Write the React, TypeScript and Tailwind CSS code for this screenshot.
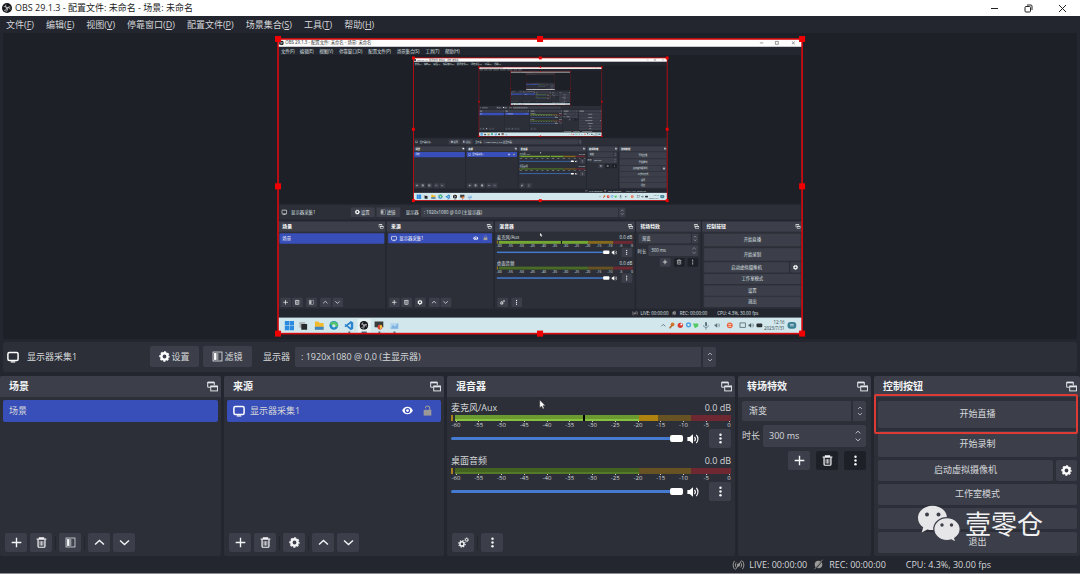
import { createContext, useContext, useState, type ReactNode, type SVGProps } from "react";

type IconProps = SVGProps<SVGSVGElement>;

const MENUS = [
  { label: "文件", key: "F", x: 6 },
  { label: "编辑", key: "E", x: 45 },
  { label: "视图", key: "V", x: 85 },
  { label: "停靠窗口", key: "D", x: 126 },
  { label: "配置文件", key: "P", x: 186 },
  { label: "场景集合", key: "S", x: 245 },
  { label: "工具", key: "T", x: 304 },
  { label: "帮助", key: "H", x: 344 },
];

const SCALE = ["-60", "-55", "-50", "-45", "-40", "-35", "-30", "-25", "-20", "-15", "-10", "-5", "0"];

const TITLE = "OBS 29.1.3 - 配置文件: 未命名 - 场景: 未命名";

/* ---------- icons ---------- */

function Icon({ children, ...props }: IconProps) {
  return (
    <svg
      viewBox="0 0 16 16"
      width={11}
      height={11}
      fill="none"
      stroke="currentColor"
      strokeWidth={2}
      aria-hidden="true"
      {...props}
    >
      {children}
    </svg>
  );
}

const PlusIcon = (p: IconProps) => (
  <Icon {...p}>
    <path d="M8 1v14M1 8h14" />
  </Icon>
);

const TrashIcon = (p: IconProps) => (
  <Icon {...p}>
    <path d="M1 3.2h14M5 2.4V1.2h6v1.2" strokeWidth={1.8} />
    <path d="M3 4v9.5c0 .8.6 1.4 1.4 1.4h7.2c.8 0 1.4-.6 1.4-1.4V4" strokeWidth={1.8} />
    <path d="M6 6v6.5M8 6v6.5M10 6v6.5" strokeWidth={1.1} />
  </Icon>
);

const FilterIcon = (p: IconProps) => (
  <Icon {...p}>
    <rect x="1.5" y="1.5" width="13" height="13" strokeWidth={1.3} opacity=".8" />
    <rect x="3" y="3" width="3" height="10" fill="currentColor" stroke="none" />
    <rect x="6" y="3" width="2.5" height="10" fill="currentColor" stroke="none" opacity=".55" />
    <rect x="8.5" y="3" width="2" height="10" fill="currentColor" stroke="none" opacity=".2" />
  </Icon>
);

const GearIcon = (p: IconProps) => (
  <Icon {...p}>
    <circle cx="8" cy="8" r="4.6" strokeWidth={3.6} />
    <circle cx="8" cy="8" r="6.6" strokeWidth={2} strokeDasharray="3 2.184" strokeDashoffset="1.5" />
  </Icon>
);

const GearsIcon = (p: IconProps) => (
  <Icon {...p}>
    <circle cx="5.8" cy="10" r="3" strokeWidth={2.2} />
    <circle cx="5.8" cy="10" r="4.7" strokeWidth={1.6} strokeDasharray="1.9 1.791" />
    <circle cx="12.6" cy="4" r="1.8" strokeWidth={1.4} />
    <circle cx="12.6" cy="4" r="2.9" strokeWidth={1} strokeDasharray="1.2 1.077" />
  </Icon>
);

const UpIcon = (p: IconProps) => (
  <Icon {...p}>
    <path d="M1.5 11L8 5l6.5 6" />
  </Icon>
);

const DownIcon = (p: IconProps) => (
  <Icon {...p}>
    <path d="M1.5 5L8 11l6.5-6" />
  </Icon>
);

const DotsIcon = (p: IconProps) => (
  <Icon {...p} stroke="none" fill="currentColor">
    <circle cx="8" cy="2.4" r="1.8" />
    <circle cx="8" cy="8" r="1.8" />
    <circle cx="8" cy="13.6" r="1.8" />
  </Icon>
);

const MonitorIcon = (p: IconProps) => (
  <Icon width={12} height={12} {...p}>
    <rect x="1.2" y="2" width="13.6" height="10.6" rx="2" />
    <path d="M5 14.6h6" strokeWidth={1.6} />
  </Icon>
);

const PopoutIcon = (p: IconProps) => (
  <Icon {...p} strokeWidth={1.4}>
    <path d="M5 9H1V1.6h9.6V6" />
    <path d="M1 2.4h9.6" strokeWidth={2} />
    <rect x="5.4" y="7.2" width="9.8" height="7.2" />
    <path d="M5.4 8.2h9.8" strokeWidth={2} />
  </Icon>
);

const EyeIcon = (p: IconProps) => (
  <Icon {...p} stroke="none" fill="currentColor">
    <path
      fillRule="evenodd"
      d="M8 2.6C4.4 2.6 1.5 4.8.2 8c1.3 3.2 4.2 5.4 7.8 5.4s6.5-2.2 7.8-5.4C14.5 4.8 11.6 2.6 8 2.6zM8 11.8a3.8 3.8 0 110-7.6 3.8 3.8 0 010 7.6z"
    />
    <circle cx="8" cy="8" r="2" />
  </Icon>
);

const LockIcon = (p: IconProps) => (
  <Icon {...p}>
    <rect x="2.4" y="7" width="11.2" height="8.4" fill="currentColor" stroke="none" />
    <path d="M5 4.6C5 2.6 6.2 1.4 8 1.4s3.2 1.2 3.2 3.2V8" strokeWidth={1.6} />
  </Icon>
);

const SpeakerIcon = (p: IconProps) => (
  <Icon width={12} height={12} {...p}>
    <path d="M.5 5.4h3L8 1.6v12.8L3.5 10.6h-3z" fill="currentColor" stroke="none" />
    <path d="M10 5.2c1.3 1.5 1.3 4.1 0 5.6M12.4 2.6c2.9 2.9 2.9 7.9 0 10.8" strokeWidth={1.5} />
  </Icon>
);

const LiveIcon = (p: IconProps) => (
  <Icon width={13} height={12} {...p} strokeWidth={1.3}>
    <path d="M2.8 2.5c-2.6 3-2.6 8 0 11M13.2 2.5c2.6 3 2.6 8 0 11M5 4.8c-1.4 1.8-1.4 4.6 0 6.4M11 4.8c1.4 1.8 1.4 4.6 0 6.4M12 2L4 14" />
    <circle cx="8" cy="8" r="1.5" fill="currentColor" />
  </Icon>
);

const RecIcon = (p: IconProps) => (
  <Icon {...p}>
    <circle cx="8" cy="8" r="5.5" fill="currentColor" stroke="none" />
    <path d="M14.5 1L3 15" stroke="#22252d" strokeWidth={2} />
    <path d="M14 1L2 15" strokeWidth={1.2} />
  </Icon>
);

const ObsLogo = (p: IconProps) => (
  <Icon {...p} stroke="none">
    <circle cx="8" cy="8" r="8" fill="#16181b" />
    <g fill="none" stroke="#e8e8e8" strokeWidth="1.3">
      <path d="M6.2 2.6c-1.3 2.6.1 4.7 2.6 4.6 2-.1 3.7 1 4.3 3" />
      <path d="M13.4 6.5c-2.6-1.2-4.8.5-4.5 3 .2 1.8-1 3.6-3 4" />
      <path d="M3.6 11.8c2.4.3 4-1.5 3.5-3.7C6.7 6.3 5.2 5.3 2.9 5.8" />
    </g>
  </Icon>
);

const CursorIcon = (p: IconProps) => (
  <svg viewBox="0 0 8 12" width={7} height={11} aria-hidden="true" {...p}>
    <path d="M.8.8v9l2.2-1.9 1.5 3.2 1.5-.7-1.5-3.1h2.8z" fill="#fff" stroke="#222" strokeWidth=".5" />
  </svg>
);

/* ---------- the captured screen inside the preview ---------- */

const W = 1080;
const H = 607;
const BTN = "#3c3f4a";
const DOCK = "#2c2f38";

// the inner copies get too small for glyphs, so they draw bars instead
const TinyContext = createContext(false);

type LabelProps = Omit<SVGProps<SVGTextElement>, "children"> & {
  x: number;
  y: number;
  fontSize?: number;
  children: string;
};

function Label({ x, y, fontSize = 9, fill = "#dfe0e3", textAnchor, children, ...rest }: LabelProps) {
  const tiny = useContext(TinyContext);
  if (tiny) {
    const width = [...children].reduce((sum, c) => sum + (c > "\u2e80" ? fontSize : fontSize * 0.5), 0);
    const shift = textAnchor === "end" ? width : textAnchor === "middle" ? width / 2 : 0;
    return <rect x={x - shift} y={y - fontSize * 0.75} width={width} height={fontSize * 0.8} fill={fill} opacity={0.45} />;
  }
  return (
    <text x={x} y={y} fontSize={fontSize} fill={fill} textAnchor={textAnchor} {...rest}>
      {children}
    </text>
  );
}

const CAPTURE_DOCKS = [
  { x: 0, w: 221, title: "场景" },
  { x: 224, w: 220, title: "来源" },
  { x: 447, w: 288, title: "混音器" },
  { x: 738, w: 133, title: "转场特效" },
  { x: 874, w: 206, title: "控制按钮" },
];

const CAPTURE_TOOLS = [
  { x: 5, Glyph: PlusIcon },
  { x: 29, Glyph: TrashIcon },
  { x: 58, Glyph: FilterIcon },
  { x: 87, Glyph: UpIcon },
  { x: 112, Glyph: DownIcon },
  { x: 229, Glyph: PlusIcon },
  { x: 254, Glyph: TrashIcon },
  { x: 282, Glyph: GearIcon },
  { x: 311, Glyph: UpIcon },
  { x: 335, Glyph: DownIcon },
  { x: 452, Glyph: GearsIcon },
  { x: 481, Glyph: DotsIcon },
];

const CAPTURE_CONTROLS = [
  { y: 401, h: 26, w: 199, label: "开始直播" },
  { y: 431, h: 26, w: 199, label: "开始录制" },
  { y: 460, h: 21, w: 175, label: "启动虚拟摄像机" },
  { y: 484, h: 21, w: 199, label: "工作室模式" },
  { y: 508, h: 21, w: 199, label: "设置" },
  { y: 531, h: 21, w: 199, label: "退出" },
];

function CaptureMeter({ y, name, live }: { y: number; name: string; live: boolean }) {
  return (
    <g>
      <Label x={451} y={y + 11}>{name}</Label>
      <Label x={730} y={y + 11} textAnchor="end">0.0 dB</Label>
      <rect x={451} y={y + 15} width={2} height={6} fill="#a8811a" />
      <rect x={455} y={y + 15} width={184} height={6} fill={live ? "#74a833" : "#4a6b25"} />
      <rect x={639} y={y + 15} width={52} height={6} fill={live ? "#86691c" : "#665222"} />
      <rect x={691} y={y + 15} width={40} height={6} fill="#6e2832" />
      {live && <rect x={583} y={y + 15} width={2} height={6} fill="#000" />}
      {SCALE.map((s, i) => (
        <Label key={s} x={456 + i * 22.8} y={y + 28} fontSize={7} textAnchor="middle">{s}</Label>
      ))}
      <rect x={451} y={y + 37} width={219} height={3} fill="#447bd0" />
      <rect x={670} y={y + 35} width={13} height={7} rx={2} fill="#fff" />
      <SpeakerIcon x={687} y={y + 33} color="#fff" />
      <rect x={708} y={y + 29} width={22} height={19} rx={2} fill={BTN} />
      <DotsIcon x={713} y={y + 33} color="#fff" />
    </g>
  );
}

function CaptureTaskbar() {
  return (
    <g>
      <rect x={0} y={574} width={W} height={33} fill="#d2e7ec" />
      <path d="M14 581h9v9h-9zM24 581h9v9h-9zM14 591h9v9h-9zM24 591h9v9h-9z" fill="#2c8be0" />
      <path d="M44 583h12v12H44z" fill="#aeb5b8" />
      <path d="M48 587h12v12H48z" fill="#272a2d" />
      <path d="M76 582h7l3 3h8v14H76z" fill="#f2b92c" />
      <path d="M76 593h18v6H76z" fill="#3a86cc" />
      <circle cx={115} cy={590} r={9} fill="#2389c4" />
      <path d="M107 587c4-8 15-6 17 2 0 5-6 5-9 3z" fill="#53c46c" />
      <circle cx={115} cy={591} r={3.5} fill="#d2e7ec" />
      <path d="M150 581l5 3v13l-5 3-13-11 2-2 11 8v-9l-11 8-2-2z" fill="#2a83cc" />
      <rect x={164} y={577} width={27} height={27} rx={3} fill="#e9f2f3" />
      <ObsLogo x={168} y={581} width={18} height={18} />
      <path d="M199 582h18v12h-18z" fill="#3a3d3c" />
      <circle cx={210} cy={594} r={5} fill="#d9483b" />
      <path d="M210 589a5 5 0 015 5l-5 5z" fill="#f0bf3a" />
      <path d="M231 585h18v13h-18z" fill="#b5d6ee" />
      <path d="M233 595l4-6 4 4 6-8v12h-14z" fill="#7fb2e0" />
      <path d="M145 604h4M172 604h11M207 604h4M238 604h4" stroke="#4b6a78" strokeWidth={3} />
      <path d="M790 592l4-4 4 4" fill="none" stroke="#456" strokeWidth={1.5} />
      <circle cx={813} cy={588} r={4} fill="#d2772b" />
      <path d="M807 596l5-6" stroke="#b65c20" strokeWidth={3} />
      <circle cx={829} cy={590} r={5.5} fill="#d93b32" />
      <circle cx={831} cy={588} r={2} fill="#fff" />
      <circle cx={846} cy={589} r={4} fill="none" stroke="#4ea2e4" strokeWidth={3} />
      <path d="M855 586h11v6l-7 4z" fill="#53cb62" />
      <rect x={880} y={583} width={4} height={9} rx={2} fill="#57707a" />
      <path d="M877 590c0 6 10 6 10 0M882 595v4" fill="none" stroke="#57707a" strokeWidth={1.5} />
      <SpeakerIcon x={899} y={584} color="#57707a" />
      <circle cx={931} cy={590} r={6} fill="#e8613c" />
      <path d="M928 588h6M928 592h6" stroke="#fff" strokeWidth={1.5} />
      <rect x={952} y={585} width={11} height={9} fill="none" stroke="#46565e" strokeWidth={1.5} />
      <SpeakerIcon x={969} y={584} color="#46565e" />
      <rect x={986} y={586} width={12} height={8} rx={2} fill="#2a3236" />
      <Label x={1044} y={588} textAnchor="end" fill="#33444c">12:16</Label>
      <Label x={1044} y={600} textAnchor="end" fill="#33444c">2023/7/31</Label>
      <rect x={1050} y={583} width={18} height={14} rx={6} fill="#3b7f93" />
      <path d="M1055 588h8M1055 591h8" stroke="#d2e7ec" strokeWidth={1.5} />
    </g>
  );
}

function CaptureScreen({ depth }: { depth: number }) {
  return (
    <g>
      <rect width={W} height={H} fill="#23262e" />
      <rect width={W} height={16} fill="#fdfdfd" />
      <ObsLogo x={2} y={3} width={10} height={10} />
      <Label x={15} y={11} fill="#333">{TITLE}</Label>
      <path d="M993 8h7M1025 5h6v6h-6zM1059 5l6 6M1065 5l-6 6" fill="none" stroke="#333" />
      {MENUS.map((m) => (
        <Label key={m.key} x={m.x} y={28}>{`${m.label}(${m.key})`}</Label>
      ))}
      <rect x={3} y={33} width={1074} height={306} fill="#1e2028" />
      {depth > 0 && <CaptureFrame x={279} y={39} width={523} height={294} depth={depth - 1} />}

      <rect x={3} y={342} width={1074} height={30} rx={2} fill={DOCK} />
      <MonitorIcon x={7} y={351} color="#fff" />
      <Label x={27} y={361}>显示器采集1</Label>
      <rect x={150} y={347} width={49} height={20} rx={2} fill={BTN} />
      <GearIcon x={158} y={351} color="#fff" />
      <Label x={171} y={361}>设置</Label>
      <rect x={203} y={347} width={49} height={20} rx={2} fill={BTN} />
      <FilterIcon x={211} y={351} color="#fff" />
      <Label x={224} y={361}>滤镜</Label>
      <Label x={263} y={361}>显示器</Label>
      <rect x={295} y={347} width={406} height={20} rx={2} fill={BTN} />
      <rect x={703} y={347} width={13} height={20} rx={2} fill={BTN} />
      <Label x={301} y={361}>: 1920x1080 @ 0,0 (主显示器)</Label>
      <path d="M707 355l2.5-3 2.5 3M707 359l2.5 3 2.5-3" fill="none" stroke="#bbb" />

      {CAPTURE_DOCKS.map((d) => (
        <g key={d.title}>
          <rect x={d.x} y={376} width={d.w} height={180} rx={2} fill={DOCK} />
          <rect x={d.x} y={376} width={d.w} height={21} fill={BTN} />
          <Label x={d.x + 9} y={390} fontSize={10} fontWeight={700} fill="#fff">{d.title}</Label>
          <PopoutIcon x={d.x + d.w - 14} y={381} color="#fff" />
        </g>
      ))}

      <rect x={3} y={400} width={216} height={22} rx={2} fill="#384eb8" />
      <Label x={9} y={414} fill="#fff">场景</Label>
      <rect x={227} y={400} width={214} height={21} rx={2} fill="#384eb8" />
      <MonitorIcon x={233} y={405} color="#fff" />
      <Label x={250} y={414} fill="#fff">显示器采集1</Label>
      <EyeIcon x={402} y={405} color="#fff" />
      <LockIcon x={422} y={404} color="#a3a099" />
      {CAPTURE_TOOLS.map(({ x, Glyph }) => (
        <g key={x}>
          <rect x={x} y={533} width={22} height={19} rx={2} fill={BTN} />
          <Glyph x={x + 5} y={537} color="#fff" />
        </g>
      ))}

      <CaptureMeter y={401} name="麦克风/Aux" live />
      <CaptureMeter y={454} name="桌面音频" live={false} />
      <CursorIcon x={539} y={398} />

      <rect x={743} y={401} width={108} height={20} rx={2} fill={BTN} />
      <rect x={853} y={401} width={13} height={20} rx={2} fill={BTN} />
      <Label x={750} y={415}>渐变</Label>
      <Label x={741} y={440}>时长</Label>
      <rect x={763} y={425} width={103} height={22} rx={2} fill={BTN} />
      <Label x={769} y={439}>300 ms</Label>
      <path
        d="M857 409l2.5-3 2.5 3M857 413l2.5 3 2.5-3M854 433l3.5-3 3.5 3M854 439l3.5 3 3.5-3"
        fill="none"
        stroke="#bbb"
      />
      <rect x={787} y={451} width={22} height={18} rx={2} fill={BTN} />
      <rect x={816} y={451} width={22} height={18} rx={2} fill="#1e2028" />
      <rect x={844} y={451} width={22} height={18} rx={2} fill="#1e2028" />
      <PlusIcon x={792} y={454} color="#fff" />
      <TrashIcon x={821} y={454} color="#ddd" />
      <DotsIcon x={849} y={454} color="#ddd" />

      {CAPTURE_CONTROLS.map((c) => (
        <g key={c.label}>
          <rect x={878} y={c.y} width={c.w} height={c.h} rx={2} fill={BTN} />
          <Label x={878 + c.w / 2} y={c.y + c.h / 2 + 3} textAnchor="middle">{c.label}</Label>
        </g>
      ))}
      <rect x={1056} y={460} width={21} height={21} rx={2} fill={BTN} />
      <GearIcon x={1061} y={465} color="#fff" />

      <LiveIcon x={729} y={559} color="#999" />
      <Label x={747} y={569}>LIVE: 00:00:00</Label>
      <RecIcon x={811} y={559} color="#999" />
      <Label x={828} y={569}>REC: 00:00:00</Label>
      <Label x={905} y={569}>CPU: 4.3%, 30.00 fps</Label>
      <CaptureTaskbar />
    </g>
  );
}

type FrameProps = { x: number; y: number; width: number; height: number; depth: number };

const HANDLES = [
  [0, 0],
  [0.5, 0],
  [1, 0],
  [0, 0.5],
  [1, 0.5],
  [0, 1],
  [0.5, 1],
  [1, 1],
];

function CaptureFrame({ x, y, width, height, depth }: FrameProps) {
  return (
    <g>
      <svg x={x} y={y} width={width} height={height} viewBox={`0 0 ${W} ${H}`} preserveAspectRatio="none">
        <TinyContext.Provider value={depth < 3}>
          <CaptureScreen depth={depth} />
        </TinyContext.Provider>
      </svg>
      <rect x={x} y={y} width={width} height={height} fill="none" stroke="#d80a0e" strokeWidth={1.6} />
      {HANDLES.map(([fx, fy]) => (
        <rect key={`${fx}-${fy}`} x={x + fx * width - 3} y={y + fy * height - 3} width={6} height={6} fill="#f00000" />
      ))}
    </g>
  );
}

/* ---------- window parts ---------- */

function ToolButton({ label, dark, children }: { label: string; dark?: boolean; children: ReactNode }) {
  return (
    <button
      type="button"
      aria-label={label}
      className={`flex h-[19px] w-[22px] shrink-0 items-center justify-center rounded-xs text-gray-100 ${
        dark ? "bg-[#1e2028]" : "bg-[#3c3f4a]"
      }`}
    >
      {children}
    </button>
  );
}

const Divider = () => <span className="h-[14px] w-px bg-[#23262e]" />;

function Dock({ title, children }: { title: string; children: ReactNode }) {
  return (
    <section className="flex min-w-0 flex-col rounded-xs bg-[#2c2f38]">
      <header className="flex h-[21px] items-center justify-between rounded-t-xs bg-[#3c3f4a] pr-[3px] pl-[9px]">
        <h2 className="text-[10px] font-bold text-gray-100">{title}</h2>
        <button type="button" aria-label={title} className="text-gray-200">
          <PopoutIcon />
        </button>
      </header>
      {children}
    </section>
  );
}

function ArrowPair({ wide }: { wide?: boolean }) {
  return wide ? (
    <svg viewBox="0 0 8 16" width={8} height={16} fill="none" stroke="#d0d1d4" aria-hidden="true">
      <path d="M1 4.5L4 1.5l3 3M1 11.5l3 3 3-3" strokeWidth="1.2" />
    </svg>
  ) : (
    <svg viewBox="0 0 6 12" width={6} height={12} fill="none" stroke="#a4a6ab" aria-hidden="true">
      <path d="M1 4l2-2 2 2M1 8l2 2 2-2" />
    </svg>
  );
}

function Channel({ id, name, live }: { id: string; name: string; live?: boolean }) {
  const [volume, setVolume] = useState(100);
  return (
    <div className="h-[53px]">
      <div className="flex h-[14px] items-center justify-between">
        <label htmlFor={id}>{name}</label>
        <span>0.0 dB</span>
      </div>
      <div className="flex h-[6px] gap-[2px]">
        <div className="w-[2px] bg-[#a8811a]" />
        <div className="flex grow">
          {live ? (
            <>
              <div className="w-[46.5%] border-b-2 border-[#86c23f] bg-[#6a9a30]" />
              <div className="w-[2px] bg-black" />
              <div className="grow border-b-2 border-[#86c23f] bg-[#6a9a30]" />
              <div className="w-[7%] bg-[#b0820f]" />
              <div className="w-[12%] bg-[#665222]" />
            </>
          ) : (
            <>
              <div className="grow border-b-2 border-[#547a29] bg-[#43621f]" />
              <div className="w-[19%] bg-[#665222]" />
            </>
          )}
          <div className="w-[14.5%] bg-[#6e2832]" />
        </div>
      </div>
      <div className="flex h-[8px] justify-between pr-[2px] pl-[5px]">
        {SCALE.map((s) => (
          <span key={s} className="flex w-0 flex-col items-center text-[6px] leading-[6px]">
            <span className="h-px w-px shrink-0 bg-[#c8c9cc]" />
            {s}
          </span>
        ))}
      </div>
      <div className="flex h-[20px] items-center">
        <input
          id={id}
          type="range"
          value={volume}
          onChange={(e) => setVolume(Number(e.target.value))}
          className="h-[7px] min-w-0 grow appearance-none bg-transparent [&::-webkit-slider-runnable-track]:h-[3px] [&::-webkit-slider-runnable-track]:rounded-full [&::-webkit-slider-runnable-track]:bg-[#447bd0] [&::-webkit-slider-thumb]:-mt-[2px] [&::-webkit-slider-thumb]:h-[7px] [&::-webkit-slider-thumb]:w-[13px] [&::-webkit-slider-thumb]:appearance-none [&::-webkit-slider-thumb]:rounded-xs [&::-webkit-slider-thumb]:bg-white"
        />
        <SpeakerIcon className="mr-[10px] ml-[4px] shrink-0 text-white" />
        <ToolButton label={name}>
          <DotsIcon />
        </ToolButton>
      </div>
    </div>
  );
}

type ControlButtonProps = { className?: string; label?: string; children?: ReactNode };

function ControlButton({ className = "h-[21px]", label, children }: ControlButtonProps) {
  return (
    <button
      type="button"
      aria-label={label}
      className={`flex shrink-0 items-center justify-center rounded-xs bg-[#3c3f4a] ${className}`}
    >
      {children}
    </button>
  );
}

function Watermark() {
  return (
    <div className="pointer-events-none absolute right-[37px] bottom-[13px] flex items-center gap-1 text-[#f1f1f2]">
      <svg viewBox="0 0 44 38" width={44} height={38} aria-hidden="true">
        <path
          d="M15.5.7C7.5.7 1 6.1 1 12.9c0 3.7 2 7 5.2 9.3l-1.5 5.3 5.6-3c1.6.4 3.4.6 5.2.6 8 0 14.5-5.4 14.5-12.2S23.500.7 15.5.7z"
          fill="#e6e6e8"
        />
        <path
          d="M30 12.7c-7.3 0-13.2 5.1-13.2 11.4S22.7 35.5 30 35.5c1.5 0 3-.2 4.3-.6l4.5 2.3-1.1-4c3.3-2 5.5-5.3 5.5-9.1 0-6.3-5.9-11.4-13.2-11.4z"
          fill="#e6e6e8"
          stroke="#3c3f4a"
          strokeWidth="1.2"
        />
        <g fill="#3c3f4a">
          <circle cx="10" cy="9.5" r="2" />
          <circle cx="21.5" cy="9.5" r="2" />
          <circle cx="25" cy="20" r="1.7" />
          <circle cx="34.5" cy="20" r="1.7" />
        </g>
      </svg>
      <span className="text-[26px] leading-6">壹零仓</span>
    </div>
  );
}

export default function App() {
  return (
    <div className="flex min-h-screen flex-col border-b border-[#8a8c90] bg-[#23262e] font-['Open_Sans','Noto_Sans_CJK_SC',sans-serif] text-[9px] leading-3 text-[#d6d7da]">
      <div className="flex h-4 items-center gap-[3px] bg-white pr-[13px] pl-[2px] text-[#222]">
        <ObsLogo width={10} height={10} />
        <h1 className="grow">{TITLE}</h1>
        <div className="flex items-center gap-[25px]">
          <button type="button" aria-label="最小化">
            <svg width={9} height={9} viewBox="0 0 9 9" stroke="currentColor">
              <path d="M1 4.5h7" />
            </svg>
          </button>
          <button type="button" aria-label="还原">
            <svg width={9} height={9} viewBox="0 0 9 9" fill="none" stroke="currentColor">
              <rect x="1" y="2.5" width="5.5" height="5.5" rx="1" />
              <path d="M3 1h4c.6 0 1 .4 1 1v4" />
            </svg>
          </button>
          <button type="button" aria-label="关闭">
            <svg width={9} height={9} viewBox="0 0 9 9" stroke="currentColor">
              <path d="M1 1l7 7M8 1L1 8" />
            </svg>
          </button>
        </div>
      </div>

      <nav className="flex h-[17px] items-center gap-3 px-[6px]">
        {MENUS.map((m) => (
          <button key={m.key} type="button">
            {m.label}(<span className="underline">{m.key}</span>)
          </button>
        ))}
      </nav>

      <div className="mx-[3px] flex justify-center bg-[#1e2028] pt-[6px] pb-[5px]">
        <svg viewBox="0 0 523 294" className="w-[48.8%] overflow-visible">
          <CaptureFrame x={0} y={0} width={523} height={294} depth={4} />
        </svg>
      </div>

      <div className="mx-[3px] my-[3px] flex h-[30px] items-center rounded-xs bg-[#2c2f38] px-1">
        <MonitorIcon className="text-white" />
        <span className="ml-2 w-[123px]">显示器采集1</span>
        <button type="button" className="flex h-[21px] w-[49px] items-center justify-center gap-px rounded-xs bg-[#3c3f4a]">
          <GearIcon className="text-white" />
          设置
        </button>
        <button type="button" className="ml-1 flex h-[21px] w-[49px] items-center justify-center gap-px rounded-xs bg-[#3c3f4a]">
          <FilterIcon className="text-white" />
          滤镜
        </button>
        <label htmlFor="display" className="mr-[5px] ml-[11px]">显示器</label>
        <div className="flex h-5 w-[39.5%] gap-[2px]">
          <select id="display" className="min-w-0 grow appearance-none rounded-l-xs bg-[#3c3f4a] px-[6px]">
            <option>: 1920x1080 @ 0,0 (主显示器)</option>
          </select>
          <span className="pointer-events-none flex w-[13px] items-center justify-center rounded-r-xs bg-[#3c3f4a]">
            <ArrowPair />
          </span>
        </div>
      </div>

      <main className="mt-px grid grow grid-cols-[221fr_220fr_288fr_133fr_206fr] gap-[3px]">
        <Dock title="场景">
          <ul className="grow px-[3px] pt-[3px]">
            <li className="flex h-[22px] items-center rounded-xs bg-[#384eb8] px-[6px]">场景</li>
          </ul>
          <div className="flex items-center gap-[3px] px-[5px] pb-1">
            <ToolButton label="添加场景"><PlusIcon /></ToolButton>
            <ToolButton label="删除场景"><TrashIcon /></ToolButton>
            <Divider />
            <ToolButton label="滤镜"><FilterIcon /></ToolButton>
            <Divider />
            <ToolButton label="上移"><UpIcon /></ToolButton>
            <ToolButton label="下移"><DownIcon /></ToolButton>
          </div>
        </Dock>

        <Dock title="来源">
          <ul className="grow px-[3px] pt-[3px]">
            <li className="flex h-[22px] items-center rounded-xs bg-[#384eb8] px-[6px]">
              <MonitorIcon className="mr-[5px] text-white" />
              <span className="grow">显示器采集1</span>
              <EyeIcon className="mr-[9px] text-white" />
              <LockIcon className="mr-[2px] text-[#9b9a98]" />
            </li>
          </ul>
          <div className="flex items-center gap-[3px] px-[5px] pb-1">
            <ToolButton label="添加来源"><PlusIcon /></ToolButton>
            <ToolButton label="删除来源"><TrashIcon /></ToolButton>
            <Divider />
            <ToolButton label="属性"><GearIcon /></ToolButton>
            <Divider />
            <ToolButton label="上移"><UpIcon /></ToolButton>
            <ToolButton label="下移"><DownIcon /></ToolButton>
          </div>
        </Dock>

        <Dock title="混音器">
          <div className="relative grow px-[4px] pt-1">
            <CursorIcon className="absolute top-[2px] left-[32%]" />
            <Channel id="mic" name="麦克风/Aux" live />
            <Channel id="desktop" name="桌面音频" />
          </div>
          <div className="flex items-center gap-[3px] px-[5px] pb-1">
            <ToolButton label="高级音频属性"><GearsIcon /></ToolButton>
            <Divider />
            <ToolButton label="更多"><DotsIcon /></ToolButton>
          </div>
        </Dock>

        <Dock title="转场特效">
          <div className="flex flex-col gap-1 py-1 pr-[5px] pl-[4px]">
            <div className="flex h-5 gap-[2px]">
              <select aria-label="转场特效" className="min-w-0 grow appearance-none rounded-l-xs bg-[#3c3f4a] px-[7px]">
                <option>渐变</option>
              </select>
              <span className="pointer-events-none flex w-[13px] items-center justify-center rounded-r-xs bg-[#3c3f4a]">
                <ArrowPair />
              </span>
            </div>
            <div className="flex h-[22px] items-center gap-[3px]">
              <label htmlFor="duration" className="shrink-0">时长</label>
              <div className="flex h-full min-w-0 grow items-center rounded-xs bg-[#3c3f4a] pr-[5px] pl-[6px]">
                <input id="duration" defaultValue="300 ms" className="min-w-0 grow bg-transparent outline-none" />
                <ArrowPair wide />
              </div>
            </div>
            <div className="flex justify-end gap-[6px]">
              <ToolButton label="添加转场"><PlusIcon /></ToolButton>
              <ToolButton label="删除转场" dark><TrashIcon /></ToolButton>
              <ToolButton label="转场属性" dark><DotsIcon /></ToolButton>
            </div>
          </div>
        </Dock>

        <div className="relative grid">
          <Dock title="控制按钮">
            <div className="flex flex-col gap-[3px] pt-1 pr-[3px] pb-[3px] pl-1">
              <ControlButton className="h-[27px]">开始直播</ControlButton>
              <ControlButton className="h-[26px]">开始录制</ControlButton>
              <div className="flex gap-[3px]">
                <ControlButton className="h-[21px] grow">启动虚拟摄像机</ControlButton>
                <ControlButton className="h-[21px] w-[21px] text-white" label="虚拟摄像机设置">
                  <GearIcon />
                </ControlButton>
              </div>
              <ControlButton>工作室模式</ControlButton>
              <ControlButton label="设置" />
              <ControlButton>退出</ControlButton>
            </div>
          </Dock>
          <div className="pointer-events-none absolute inset-x-0 top-[18px] mr-[2px] h-10 rounded-xs border-2 border-[#dc3a35]" />
          <Watermark />
        </div>
      </main>

      <footer className="flex h-[17px] items-center justify-end pr-[89px]">
        <LiveIcon className="mr-[4px] text-[#9b9a98]" />
        <span>LIVE: 00:00:00</span>
        <RecIcon className="mr-[5px] ml-[6px] text-[#9b9a98]" />
        <span>REC: 00:00:00</span>
        <span className="ml-5">CPU: 4.3%, 30.00 fps</span>
      </footer>
    </div>
  );
}
